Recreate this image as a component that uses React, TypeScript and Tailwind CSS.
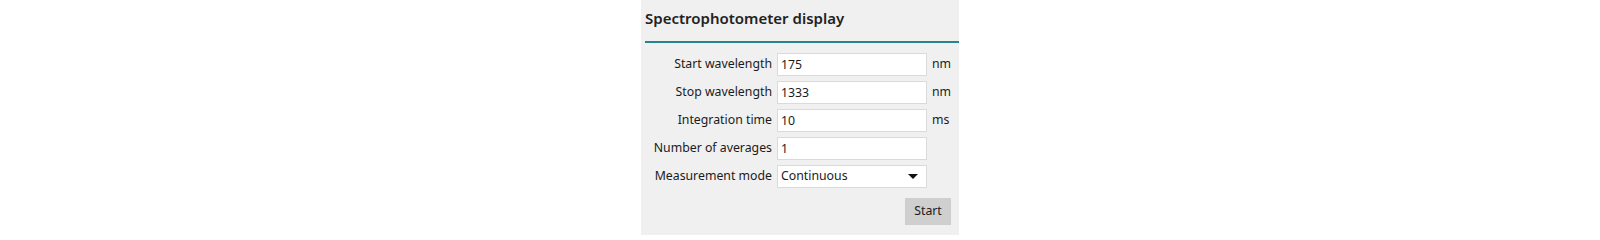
import { useState } from "react"

const fields = [
  { label: "Start wavelength", value: "175", unit: "nm" },
  { label: "Stop wavelength", value: "1333", unit: "nm" },
  { label: "Integration time", value: "10", unit: "ms" },
  { label: "Number of averages", value: "1", unit: "" },
]

export default function App() {
  const [values, setValues] = useState(fields.map((f) => f.value))

  return (
    <div className="min-h-[235px] bg-white font-['Noto_Sans',sans-serif] text-[#1b1b1b]">
      <div className="mx-auto flex min-h-[235px] w-[318px] flex-col bg-[#f0f0f0]">
        {/* Header */}
        <div className="ml-1 border-b-2 border-[#23878d] pt-[7px] pb-[12px]">
          <h2 className="text-[15px] leading-[22px] font-semibold text-[#222]">Spectrophotometer display</h2>
        </div>

        {/* Settings */}
        <div className="mt-[10px] grid grid-cols-[131px_150px_auto] items-center gap-x-[5px] gap-y-[5px] text-[12.3px]">
          {fields.map((f, i) => (
            <div key={f.label} className="contents">
              <label className="text-right whitespace-nowrap">{f.label}</label>
              <input
                value={values[i]}
                onChange={(e) => setValues(values.map((v, j) => (j === i ? e.target.value : v)))}
                className="h-[23px] w-[150px] border border-[#dadada] bg-white px-[3px] text-[12.3px] outline-none"
              />
              <span>{f.unit}</span>
            </div>
          ))}
          <label className="text-right whitespace-nowrap">Measurement mode</label>
          <div className="flex h-[23px] w-[150px] items-center justify-between border border-[#dadada] bg-white pr-[8px] pl-[3px]">
            <span>Continuous</span>
            <svg width="10" height="5" viewBox="0 0 10 5">
              <path d="M0 0h10L5 5z" fill="#111" />
            </svg>
          </div>
          <span />
        </div>

        <div className="mt-[10px] flex justify-end pr-[8px]">
          <button className="h-[27px] w-[46px] bg-[#cfcfcf] text-[12.3px]">Start</button>
        </div>
      </div>
    </div>
  )
}
